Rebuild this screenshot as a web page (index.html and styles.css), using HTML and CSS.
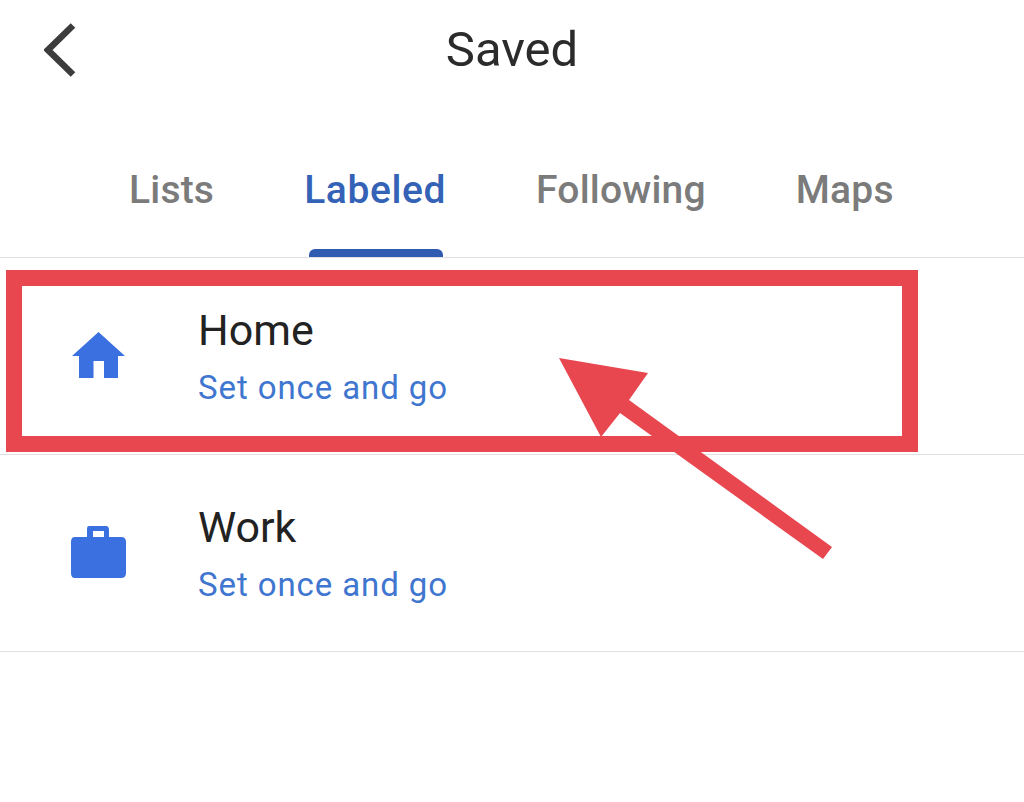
FILE: index.html
```html
<!DOCTYPE html>
<html>
<head>
  <title>Saved</title>
  <link rel="stylesheet" href="styles.css">
</head>
<body>
  <div class="page">
    <div class="header">
      <svg class="back" width="32" height="54" viewBox="0 0 32 54">
        <path d="M29 2.5 L4 27 L29 51.5" fill="none" stroke="#3c3c3c" stroke-width="6.500"/>
      </svg>
      <div class="title">Saved</div>
    </div>

    <div class="tabs">
      <div class="tab">Lists</div>
      <div class="tab active">Labeled</div>
      <div class="tab">Following</div>
      <div class="tab">Maps</div>
    </div>

    <div class="row">
      <div class="row-icon">
        <svg width="56" height="48" viewBox="0 0 56 48">
          <path d="M28.500 1 L55 25 L48 25 L48 47 L34 47 L34 30 L23.500 30 L23.500 47 L9 47 L9 25 L2 25 Z" fill="#3a70e0"/>
        </svg>
      </div>
      <div class="row-text">
        <div class="row-name">Home</div>
        <div class="row-sub">Set once and go</div>
      </div>
    </div>

    <div class="row">
      <div class="row-icon">
        <svg width="56" height="54" viewBox="0 0 56 54">
          <path fill-rule="evenodd" fill="#3a70e0" d="M19 1 H36 Q39 1 39 5 V12 H51 Q56 12 56 17 V48 Q56 53 51 53 H5 Q1 53 1 48 V17 Q1 12 5 12 H17 V4 Q17 1 19 1 Z M23 6 V12 H34 V6 Z"/>
        </svg>
      </div>
      <div class="row-text">
        <div class="row-name">Work</div>
        <div class="row-sub">Set once and go</div>
      </div>
    </div>

    <div class="highlight"></div>
    <svg class="arrow" width="300" height="230" viewBox="550 345 300 230">
      <path d="M559 358 L648 373 L629 400 L832 547 L823 559 L620 413 L601 437 Z" fill="#e8474f"/>
    </svg>
  </div>
</body>
</html>
```

FILE: styles.css
```css
* {
  box-sizing: border-box;
}

body {
  margin: 0;
  background: #fff;
  font-family: Roboto, "Liberation Sans", sans-serif;
}

.page {
  position: relative;
  height: 802px;
  overflow: hidden;
}

.header {
  height: 101px;
  padding: 23px 0 0 44px;
  position: relative;
  text-align: center;
}

.back {
  display: block;
}

.title {
  position: absolute;
  left: 0;
  right: 0;
  top: 22px;
  font-size: 49px;
  line-height: 56px;
  color: #2b2b2b;
}

.tabs {
  display: flex;
  gap: 90px;
  height: 157px;
  padding: 65px 0 0 129px;
  border-bottom: 1px solid #e0e0e0;
}

.tab {
  position: relative;
  height: 91px;
  font-size: 39px;
  font-weight: 500;
  line-height: 48px;
  letter-spacing: 0.2px;
  color: #7b7b7b;
}

.tab.active {
  letter-spacing: 0.6px;
  color: #3462b6;
}

.tab.active::after {
  content: "";
  position: absolute;
  left: 5px;
  width: 134px;
  bottom: 0;
  height: 8px;
  background: #2f5bb0;
  border-radius: 6px 6px 0 0;
}

.row {
  display: flex;
  align-items: center;
  height: 197px;
  border-bottom: 1px solid #e0e0e0;
}

.row-icon {
  display: flex;
  justify-content: center;
  width: 198px;
}

.row-icon svg {
  margin: 0 2px 2px 0;
}

.row-text {
  padding-top: 3px;
}

.row-name {
  margin-top: -1px;
  font-size: 43px;
  line-height: 48px;
  color: #222;
}

.row-sub {
  margin-top: 14px;
  font-size: 33px;
  line-height: 40px;
  letter-spacing: 0.9px;
  color: #3f76cf;
}

.highlight {
  position: absolute;
  left: 6px;
  top: 270px;
  width: 912px;
  height: 182px;
  border: 16px solid #e8474f;
}

.arrow {
  position: absolute;
  left: 550px;
  top: 345px;
}
```
